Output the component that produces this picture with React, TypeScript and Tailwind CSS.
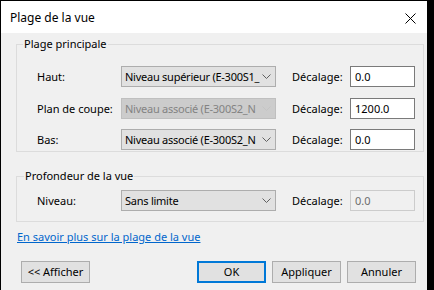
import React from "react";

const font = { fontFamily: '"Noto Sans", "Open Sans", sans-serif' };

function Chevron({ color = "#555" }: { color?: string }) {
  return (
    <svg width="9" height="5" viewBox="0 0 9 5" className="shrink-0">
      <path d="M0.5 0.5 L4.5 4.5 L8.5 0.5" fill="none" stroke={color} strokeWidth="1" />
    </svg>
  );
}

function Select({ text, disabled = false }: { text: string; disabled?: boolean }) {
  return (
    <div
      className={
        "flex items-center w-[155px] h-[21px] border pl-[3px] pr-[4px] " +
        (disabled ? "bg-[#cccccc] border-[#bfbfbf] text-[#838383]" : "bg-[#e1e1e1] border-[#adadad] text-black")
      }
    >
      <div className="flex-1 min-w-0 whitespace-nowrap text-[11px] leading-[16px] tracking-[-0.25px]">{text}</div>
      <div className="pl-[2px] flex items-center">
        <Chevron color={disabled ? "#c4c4c4" : "#606060"} />
      </div>
    </div>
  );
}

function Input({ value, disabled = false }: { value: string; disabled?: boolean }) {
  return (
    <div
      className={
        "w-[65px] h-[21px] border flex items-center pl-[4px] text-[11px] leading-[16px] " +
        (disabled ? "bg-[#f0f0f0] border-[#cccccc] text-[#6d6d6d]" : "bg-white border-[#7a7a7a] text-black")
      }
    >
      {value}
    </div>
  );
}

function Row({ label, select, selectDisabled, value, inputDisabled }: { label: string; select: string; selectDisabled?: boolean; value: string; inputDisabled?: boolean }) {
  return (
    <div className="flex items-center h-[21px]">
      <div className="w-[104px] pl-[20px] text-[11px] leading-[16px] whitespace-nowrap">{label}</div>
      <Select text={select} disabled={selectDisabled} />
      <div className="w-[74px] pl-[16px] text-[11px] leading-[16px] whitespace-nowrap">Décalage:</div>
      <Input value={value} disabled={inputDisabled} />
    </div>
  );
}

function Button({ children, primary = false }: { children: React.ReactNode; primary?: boolean }) {
  return (
    <div
      className={
        "w-[69px] h-[22px] flex items-center justify-center bg-[#e1e1e1] text-[11px] leading-[16px] " +
        (primary ? "border-2 border-[#0078d7]" : "border border-[#adadad]")
      }
    >
      {children}
    </div>
  );
}

export default function App() {
  return (
    <div className="w-[434px] h-[290px] bg-black pl-[1px] pt-[1px] overflow-hidden" style={font}>
      <div className="w-[426px] h-[289px] bg-[#f0f0f0] flex flex-col text-black">
        <div className="h-[32px] bg-white flex items-center justify-between pl-[9px] pr-[11px] shrink-0">
          <span className="text-[12px] leading-[16px] mt-[2px]">Plage de la vue</span>
          <svg width="11" height="11" viewBox="0 0 11 11" className="mt-[2px]">
            <path d="M0.5 0.5 L10.5 10.5 M10.5 0.5 L0.5 10.5" stroke="#000" strokeWidth="1" />
          </svg>
        </div>
        <div className="pl-[15px] pr-[3px] flex flex-col">
          <fieldset className="border border-[#dcdcdc] mt-[3px] pb-[1px]">
            <legend className="ml-[6px] px-[1px] text-[11px] leading-[16px]">Plage principale</legend>
            <div className="flex flex-col pt-[14px]">
              <Row label="Haut:" select="Niveau supérieur (E-300S1_" value="0.0" />
              <div className="h-[11px]" />
              <Row label="Plan de coupe:" select="Niveau associé (E-300S2_N" selectDisabled value="1200.0" />
              <div className="h-[10px]" />
              <Row label="Bas:" select="Niveau associé (E-300S2_N" value="0.0" />
            </div>
          </fieldset>
          <fieldset className="border border-[#dcdcdc] mt-[16px] pb-[10px]">
            <legend className="ml-[7px] px-[1px] text-[11px] leading-[16px]">Profondeur de la vue</legend>
            <div className="pt-[6px]">
              <Row label="Niveau:" select="Sans limite" value="0.0" inputDisabled />
            </div>
          </fieldset>
          <div className="mt-[7px] ml-[1px] text-[11px] leading-[16px] text-[#0066cc] underline">
            En savoir plus sur la plage de la vue
          </div>
          <div className="mt-[16px] flex items-center pl-[5px]">
            <Button>&lt;&lt; Afficher</Button>
            <div className="flex-1" />
            <Button primary>OK</Button>
            <div className="w-[6px]" />
            <Button>Appliquer</Button>
            <div className="w-[6px]" />
            <Button>Annuler</Button>
            <div className="w-[8px]" />
          </div>
        </div>
      </div>
    </div>
  );
}
